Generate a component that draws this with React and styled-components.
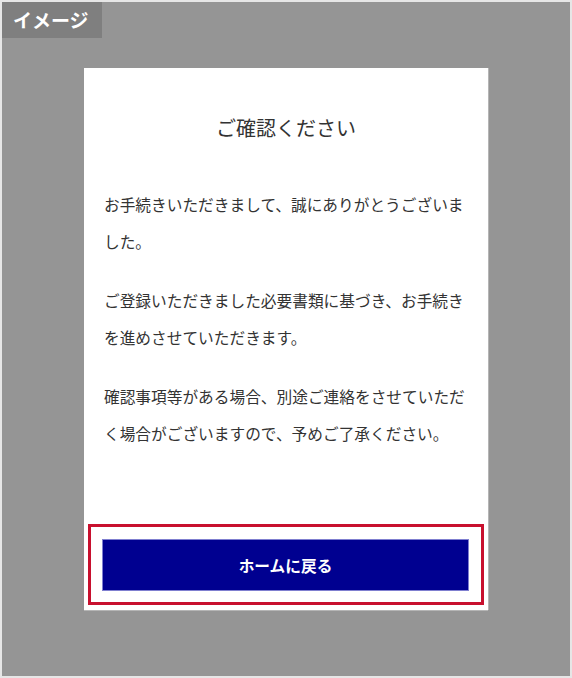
import React from "react";
import styled, { createGlobalStyle } from "styled-components";

const GlobalStyle = createGlobalStyle`
  html, body { margin: 0; padding: 0; }
  body {
    font-family: "Noto Sans CJK JP", "Noto Sans", sans-serif;
    background: #e6e6e6;
  }
`;

const Frame = styled.div`
  position: relative;
  box-sizing: border-box;
  width: 572px;
  height: 678px;
  border: 2px solid #e6e6e6;
  background: #959595;
  display: flex;
  align-items: center;
  justify-content: center;
`;

const Tag = styled.div`
  position: absolute;
  top: 0;
  left: 0;
  width: 100px;
  height: 36px;
  background: #7f7f7f;
  color: #fff;
  font-size: 19px;
  font-weight: 700;
  line-height: 36px;
  box-sizing: border-box;
  padding-left: 11px;
`;

const Card = styled.section`
  box-sizing: border-box;
  width: 404px;
  height: 542px;
  background: #fff;
  box-shadow: 1px 0 0 #b5b5b5, 0 1px 0 #b5b5b5;
  padding: 45px 20px 5px;
  display: flex;
  flex-direction: column;
`;

const Title = styled.h1`
  margin: 0;
  text-align: center;
  font-size: 20px;
  font-weight: 400;
  line-height: 30px;
  color: #333;
`;

const Body = styled.div`
  margin-top: 43px;
  flex: 1;
`;

const Para = styled.p`
  margin: 0 0 22px;
  font-size: 15.7px;
  line-height: 37px;
  color: #333;
  &:last-child { margin-bottom: 0; }
`;

const Highlight = styled.div`
  margin: 0 -16px 0 -16px;
  border: 3px solid #c8102e;
  padding: 12px 12px 11px 11px;
`;

const HomeButton = styled.button`
  display: block;
  width: 100%;
  height: 52px;
  box-sizing: border-box;
  background: #000090;
  border: 1px solid #7f7fd0;
  color: #fff;
  font-family: "Noto Sans CJK JP", "Noto Sans", sans-serif;
  font-size: 15.7px;
  font-weight: 700;
  cursor: pointer;
`;

export default function App() {
  return (
    <>
      <GlobalStyle />
      <Frame>
        <Tag>イメージ</Tag>
        <Card>
          <Title>ご確認ください</Title>
          <Body>
            <Para>お手続きいただきまして、誠にありがとうございました。</Para>
            <Para>ご登録いただきました必要書類に基づき、お手続きを進めさせていただきます。</Para>
            <Para>確認事項等がある場合、別途ご連絡をさせていただく場合がございますので、予めご了承ください。</Para>
          </Body>
          <Highlight>
            <HomeButton>ホームに戻る</HomeButton>
          </Highlight>
        </Card>
      </Frame>
    </>
  );
}
